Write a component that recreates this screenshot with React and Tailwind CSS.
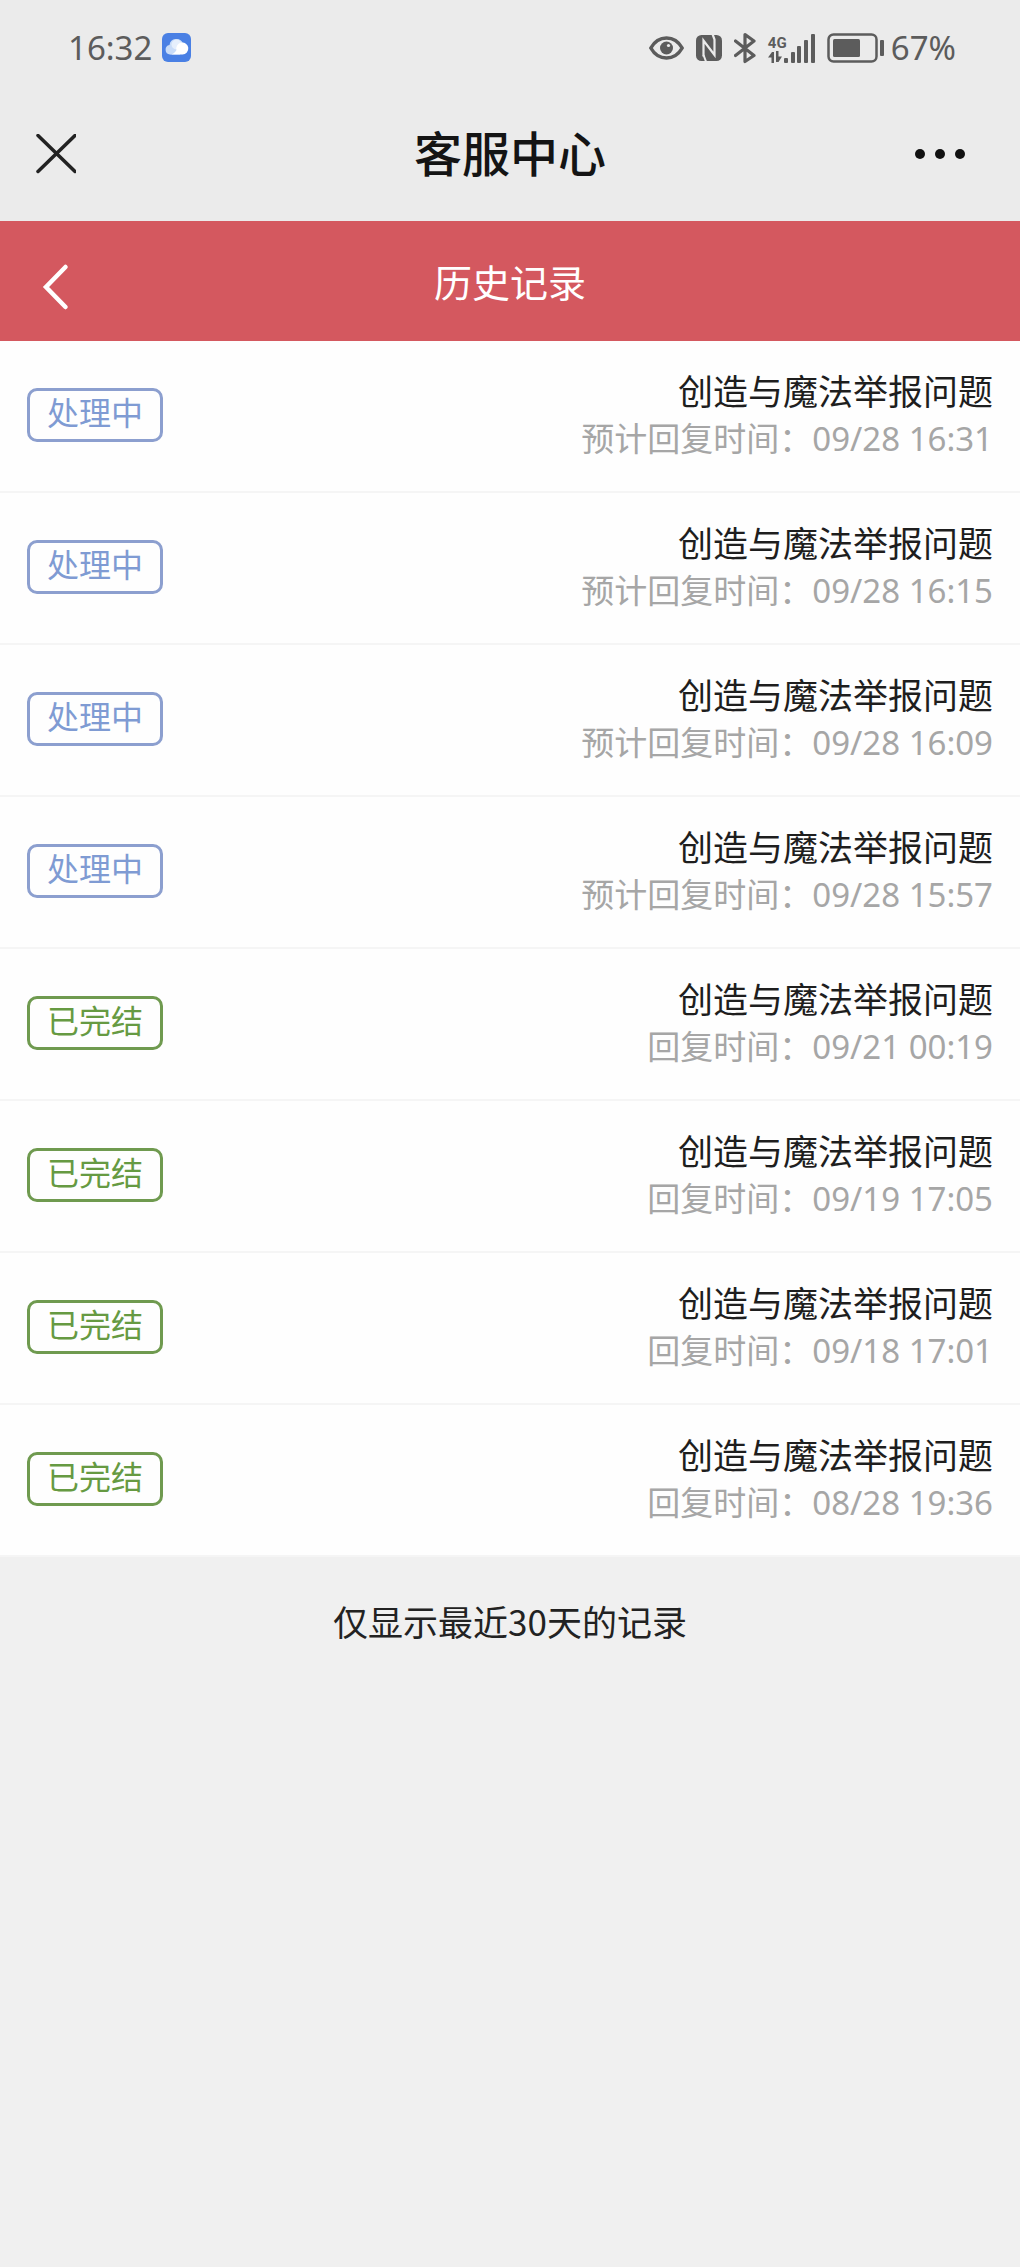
const records = [
    { id: 1, status: 'pending', title: '创造与魔法举报问题', time: '09/28 16:31' },
    { id: 2, status: 'pending', title: '创造与魔法举报问题', time: '09/28 16:15' },
    { id: 3, status: 'pending', title: '创造与魔法举报问题', time: '09/28 16:09' },
    { id: 4, status: 'pending', title: '创造与魔法举报问题', time: '09/28 15:57' },
    { id: 5, status: 'done', title: '创造与魔法举报问题', time: '09/21 00:19' },
    { id: 6, status: 'done', title: '创造与魔法举报问题', time: '09/19 17:05' },
    { id: 7, status: 'done', title: '创造与魔法举报问题', time: '09/18 17:01' },
    { id: 8, status: 'done', title: '创造与魔法举报问题', time: '08/28 19:36' },
];

const statuses = {
    pending: { label: '处理中', timeLabel: '预计回复时间：', className: 'border-[#8c9fcf] text-[#7f9bd3]' },
    done: { label: '已完结', timeLabel: '回复时间：', className: 'border-[#6f9a4f] text-[#669a42]' },
};

function CloudIcon() {
    return (
        <svg className="w-[29px] h-[29px]" viewBox="0 0 29 29">
            <rect width="29" height="29" rx="6" fill="#4a80e4" />
            <path d="M8 21.500a4.800 4.800 0 0 1-.5-9.500 7 7 0 0 1 13.500-1.500l-3 11z" fill="#c9dcf8" />
            <circle cx="14.500" cy="11.500" r="5" fill="#e6effc" />
            <path d="M7.500 21.500c3.500 0 5.500-2 7-4.500a6 6 0 1 1 6 4.500z" fill="#fff" />
        </svg>
    );
}

function EyeIcon() {
    return (
        <svg className="w-[35px] h-6" viewBox="0 0 35 24" fill="none">
            <path d="M1.800 12C5.500 5.500 11 2 17.500 2s12 3.500 15.700 10C29.500 18.500 24 22 17.500 22S5.500 18.500 1.800 12z" stroke="currentColor" strokeWidth="3.500" strokeLinejoin="round" />
            <circle cx="17.500" cy="12" r="6.500" fill="currentColor" />
            <circle cx="19.500" cy="9.500" r="1.600" fill="#ebebeb" />
        </svg>
    );
}

function NfcIcon() {
    return (
        <svg className="w-[26px] h-7" viewBox="0 0 26 28" fill="none">
            <rect y="1" width="26" height="26" rx="5.500" fill="currentColor" />
            <path d="M7.500 22.500V6.500l11 14.500V5.500L16.500 0" stroke="#ebebeb" strokeWidth="2.200" />
            <path d="M7.500 21l2.500 6.500" stroke="#ebebeb" strokeWidth="2" />
        </svg>
    );
}

function BluetoothIcon() {
    return (
        <svg className="w-[22px] h-8" viewBox="0 0 22 32" fill="none">
            <path d="M1.500 9L20 23.500 11 29.500v-27L20 9 1.500 23.500" stroke="currentColor" strokeWidth="3.200" strokeLinejoin="round" strokeLinecap="round" />
        </svg>
    );
}

function SignalIcon() {
    return (
        <div className="flex items-end">
            <div className="flex flex-col items-start w-4">
                <span className="font-['Roboto',sans-serif] text-[15px] leading-4 font-bold">4G</span>
                <svg className="w-3.5 h-3" viewBox="0 0 14 12" fill="currentColor">
                    <path d="M0 6.500L4 1h2v11H3.500V6.500zM8 0h2.500v5.500H14L10.500 11H8z" />
                </svg>
            </div>
            <svg className="w-[31px] h-[30px]" viewBox="0 0 31 30" fill="currentColor">
                <rect x="0" y="25" width="4" height="5" rx="1" />
                <rect x="7" y="19" width="4" height="11" rx="1" />
                <rect x="13" y="13" width="4" height="17" rx="1" />
                <rect x="20" y="7" width="4" height="23" rx="1" />
                <rect x="27" y="1" width="4" height="29" rx="1" />
            </svg>
        </div>
    );
}

function BatteryIcon() {
    return (
        <svg className="w-[58px] h-[30px]" viewBox="0 0 58 30" fill="none">
            <rect x="1.500" y="1.500" width="48" height="27" rx="5" stroke="currentColor" strokeWidth="2.500" />
            <rect x="6" y="6" width="27" height="18" rx="1.500" fill="currentColor" />
            <rect x="53" y="7" width="4" height="16" rx="1" fill="currentColor" />
        </svg>
    );
}

function StatusBar() {
    return (
        <div className="h-[87px] pt-2 pl-[68px] pr-16 flex items-center justify-between text-[#5c5c5c] font-['Noto_Sans',sans-serif] text-[33px] leading-10">
            <div className="flex items-center gap-2.5">
                <span>16:32</span>
                <CloudIcon />
            </div>
            <div className="flex items-center gap-3">
                <EyeIcon />
                <NfcIcon />
                <BluetoothIcon />
                <SignalIcon />
                <div className="flex items-center gap-1.5">
                    <BatteryIcon />
                    <span>67%</span>
                </div>
            </div>
        </div>
    );
}

function RecordRow({ record }) {
    const status = statuses[record.status];

    return (
        <li className="flex items-center justify-between px-[27px] pt-[27px] pb-[29px] border-b-2 border-[#f5f5f5]">
            <span className={`px-[17px] pb-2 border-3 rounded-[10px] text-[32px] leading-10 ${status.className}`}>
                {status.label}
            </span>
            <div className="text-right">
                <h2 className="text-[35px] leading-11 text-[#1e1e1e]">{record.title}</h2>
                <p className="text-[33px] leading-[50px] text-[#a6a6a6]">
                    {status.timeLabel}
                    <time className="font-['Noto_Sans',sans-serif] leading-8">{record.time}</time>
                </p>
            </div>
        </li>
    );
}

export default function App() {
    return (
        <div className="min-h-screen bg-[#f0f0f0] font-['Noto_Sans_CJK_SC',sans-serif]">
            <header className="bg-[#ebebeb]">
                <StatusBar />
                <div className="h-[134px] px-9 flex items-center justify-between">
                    <button type="button" aria-label="关闭" className="w-18">
                        <svg className="w-10 h-10" viewBox="0 0 40 40" fill="none">
                            <path d="M2 1.500L39 37.500M39 1.500L2 37.500" stroke="#222" strokeWidth="3.500" strokeLinecap="round" />
                        </svg>
                    </button>
                    <h1 className="pb-1.5 text-[48px] leading-16 font-medium text-[#141414]">客服中心</h1>
                    <button type="button" aria-label="更多" className="w-18">
                        <svg className="w-14 h-3" viewBox="0 0 56 12" fill="#111">
                            <circle cx="8" cy="6" r="5" />
                            <circle cx="28" cy="6" r="5" />
                            <circle cx="48" cy="6" r="5" />
                        </svg>
                    </button>
                </div>
            </header>

            <nav className="h-[120px] px-9 flex items-center justify-between bg-[#d4585f] text-white">
                <button type="button" aria-label="返回" className="w-14 pt-3">
                    <svg className="w-10 h-12" viewBox="0 0 40 48" fill="none">
                        <path d="M29.500 4L10 24l19.500 20" stroke="currentColor" strokeWidth="4.500" strokeLinecap="round" strokeLinejoin="miter" />
                    </svg>
                </button>
                <p className="text-[38px] leading-12">历史记录</p>
                <div className="w-14" />
            </nav>

            <main>
                <ul className="bg-[#fefefe]">
                    {records.map((record) => (
                        <RecordRow key={record.id} record={record} />
                    ))}
                </ul>
                <p className="pt-10 text-center text-[35px] leading-12 text-[#222]">仅显示最近30天的记录</p>
            </main>
        </div>
    );
}
